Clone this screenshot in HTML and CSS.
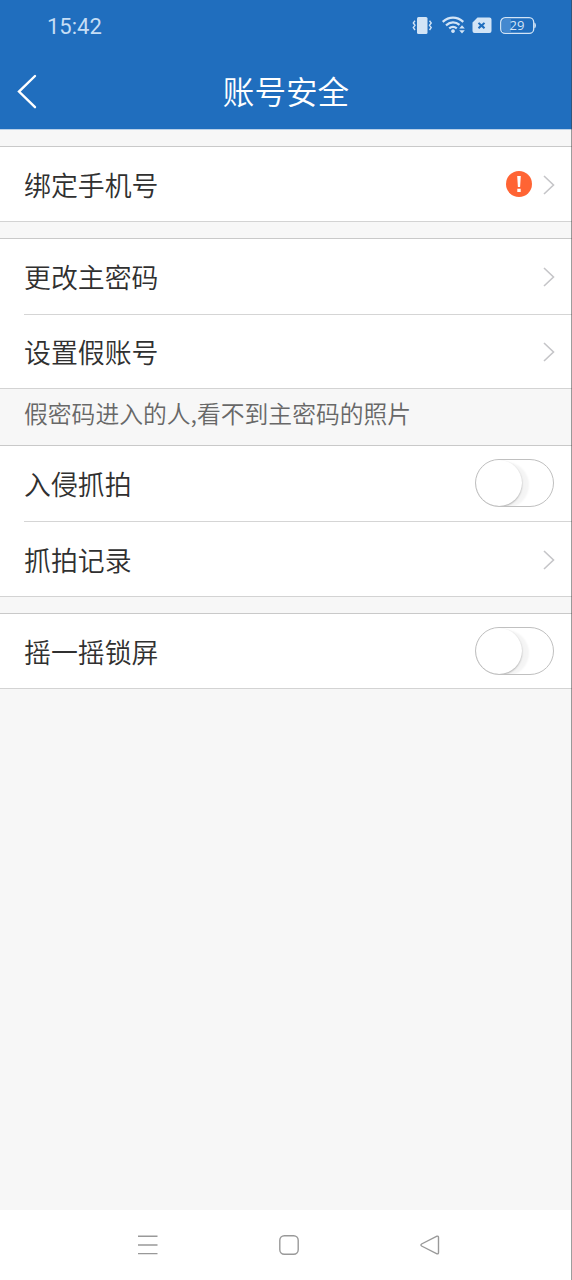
FILE: index.html
```html
<!DOCTYPE html>
<html lang="zh-CN">
<head>
<meta charset="utf-8">
<title>账号安全</title>
<link rel="stylesheet" href="styles.css">
</head>
<body>
<div class="screen">
  <header class="header">
    <div class="status">
      <span class="time">15:42</span>
      <svg class="status-icons" width="124" height="20" viewBox="0 0 124 20" fill="none">
        <g fill="#d2e4f6">
          <rect x="5" y="1" width="10.5" height="17" rx="1.5"/>
          <path d="M41 17a1.900 1.900 0 1 1 .01 0z"/>
          <path d="M47.200 12.500l2.800-3.300 2.800 3.300zM47.200 14.200l2.800 3.300 2.800-3.300z"/>
          <path fill-rule="evenodd" d="M65.500 1.500H77.500a2 2 0 0 1 2 2V15a2 2 0 0 1-2 2H62.500a2 2 0 0 1-2-2V6.500zM67.200 6.200l-1.400 1.400 2 2-2 2 1.400 1.400 2.300-2 2.300 2 1.400-1.400-2-2 2-2-1.400-1.400-2.300 2z"/>
          <path d="M122.300 6.500q1.700.5 1.700 2.900t-1.700 2.900z"/>
        </g>
        <g stroke="#d2e4f6">
          <path stroke-width="1.400" d="M3 4.700L1.300 6.900 3 9.300 1.300 11.600 3 14M17.500 4.700l1.700 2.200-1.700 2.400 1.700 2.300-1.700 2.400"/>
          <path stroke-width="2.200" d="M30.700 5.800Q35.500 1.600 41 1.600t10.300 4.200M34 9.300q3.300-2.900 7-2.900t6.500 2.500M37.200 12.300q1.800-1.500 3.800-1.500t3.800 1.500"/>
          <rect stroke-width="1.300" x="88.700" y="1.700" width="33" height="15.700" rx="4.500"/>
        </g>
        <path fill="#4488cf" d="M93 3h6v13h-6q-3 0-3-3V6q0-3 3-3z"/>
        <text class="battery-text" x="105" y="14" text-anchor="middle">29</text>
      </svg>
    </div>
    <div class="navbar">
      <svg class="back" width="20" height="36" viewBox="0 0 20 36"><path d="M18 2L2 17.600 18 33.200" /></svg>
      <h1 class="title">账号安全</h1>
    </div>
  </header>
  <main class="content">
    <section class="group group-bind">
      <div class="row">
        <span class="label">绑定手机号</span>
        <svg class="alert" width="26" height="26" viewBox="0 0 26 26"><circle cx="13" cy="13" r="13"/><path d="M11.200 4.900h3.600l-.7 11.200h-2.200zM11.300 17.800h3.400v3.300h-3.400z"/></svg>
        <svg class="chevron" width="12" height="20" viewBox="0 0 12 20"><path d="M1 1l9.500 9L1 19"/></svg>
      </div>
    </section>
    <section class="group group-password">
      <div class="row">
        <span class="label">更改主密码</span>
        <svg class="chevron" width="12" height="20" viewBox="0 0 12 20"><path d="M1 1l9.500 9L1 19"/></svg>
      </div>
      <div class="row">
        <span class="label">设置假账号</span>
        <svg class="chevron" width="12" height="20" viewBox="0 0 12 20"><path d="M1 1l9.500 9L1 19"/></svg>
      </div>
    </section>
    <p class="note">假密码进入的人,看不到主密码的照片</p>
    <section class="group group-capture">
      <div class="row">
        <span class="label">入侵抓拍</span>
        <span class="switch"><span class="knob"></span></span>
      </div>
      <div class="row row-records">
        <span class="label">抓拍记录</span>
        <svg class="chevron" width="12" height="20" viewBox="0 0 12 20"><path d="M1 1l9.500 9L1 19"/></svg>
      </div>
    </section>
    <section class="group group-shake">
      <div class="row">
        <span class="label">摇一摇锁屏</span>
        <span class="switch"><span class="knob"></span></span>
      </div>
    </section>
  </main>
  <nav class="system-nav">
    <svg width="20" height="20" viewBox="0 0 20 20"><path d="M0 1.200h19.500M0 10h19.500M0 18.600h19.500"/></svg>
    <svg width="20" height="20" viewBox="0 0 20 20"><rect x=".8" y=".8" width="18.400" height="18.400" rx="4.500"/></svg>
    <svg width="20" height="20" viewBox="0 0 20 20"><path d="M17 1.200L1.600 9q-1.300 1 0 2L17 18.800q1.500.4 1.500-1.200V2.400Q18.500.8 17 1.200z"/></svg>
  </nav>
  <div class="edge"></div>
</div>
</body>
</html>
```

FILE: styles.css
```css
* {
  box-sizing: border-box;
}

body {
  margin: 0;
  font-family: "Noto Sans CJK SC", sans-serif;
}

.screen {
  position: relative;
  display: flex;
  flex-direction: column;
  width: 572px;
  height: 1280px;
  overflow: hidden;
  background: #f7f7f7;
}

.header {
  height: 130px;
  background: #206ebe;
  border-bottom: 1px solid #b9d0e8;
}

.status {
  display: flex;
  align-items: center;
  justify-content: space-between;
  height: 52px;
  padding: 0 36px 0 47px;
}

.time {
  padding-top: 1px;
  font: 22px/28px Roboto, sans-serif;
  color: #c6def5;
}

.status-icons {
  display: block;
  margin-bottom: 1px;
}

.battery-text {
  font: 13px "Open Sans", sans-serif;
  fill: #d2e4f6;
}

.navbar {
  display: grid;
  grid-template-columns: 60px 1fr 60px;
  align-items: center;
  height: 77px;
}

.back {
  margin: 2px 0 0 17px;
  fill: none;
  stroke: #fff;
  stroke-width: 2.4;
  stroke-linecap: round;
}

.title {
  margin: 0;
  padding-bottom: 1px;
  font-size: 31.6px;
  font-weight: 350;
  line-height: 44px;
  text-align: center;
  color: #fff;
}

.content {
  flex: 1;
  padding-top: 16px;
}

.group {
  background: #fff;
  border-top: 1px solid #c9c9c9;
  border-bottom: 1px solid #d3d3d3;
}

.group-bind {
  height: 76px;
  margin-bottom: 16px;
}

.group-password {
  height: 151px;
}

.group-capture {
  height: 152px;
  margin-bottom: 16px;
}

.group-shake {
  height: 76px;
}

.row {
  display: flex;
  align-items: center;
  height: 75px;
  margin-left: 24px;
  padding-right: 17px;
}

.row + .row {
  border-top: 1px solid #d5d5d5;
}

.row-records {
  padding-top: 1px;
}

.label {
  flex: 1;
  font-size: 26.9px;
  font-weight: 350;
  line-height: 38px;
  color: #303030;
}

.chevron {
  fill: none;
  stroke: #c5c5c8;
  stroke-width: 1.6;
}

.alert {
  margin: 0 11px 2px 0;
  fill: #fff;
}

.alert circle {
  fill: #ff6434;
}

.note {
  height: 56px;
  margin: 0;
  padding: 6px 24px 0;
  font-size: 23.8px;
  font-weight: 350;
  line-height: 36px;
  color: #686868;
  white-space: nowrap;
}

.switch {
  display: flex;
  width: 79px;
  height: 48px;
  margin: 0 1px 2px 0;
  border: 1.5px solid #c0c0c0;
  border-radius: 24px;
  overflow: hidden;
}

.knob {
  width: 46px;
  height: 46px;
  border-radius: 50%;
  background: #fff;
  box-shadow: 0 1px 2px rgba(0, 0, 0, .3), 7px 2px 2px rgba(0, 0, 0, .045);
}

.system-nav {
  display: flex;
  gap: 121px;
  height: 70px;
  padding: 25px 0 0 138px;
  background: #fff;
}

.system-nav svg {
  fill: none;
  stroke: #999;
  stroke-width: 1.4;
}

.edge {
  position: absolute;
  top: 0;
  right: 0;
  bottom: 0;
  width: 1px;
  background: rgba(60, 60, 60, .5);
}
```
